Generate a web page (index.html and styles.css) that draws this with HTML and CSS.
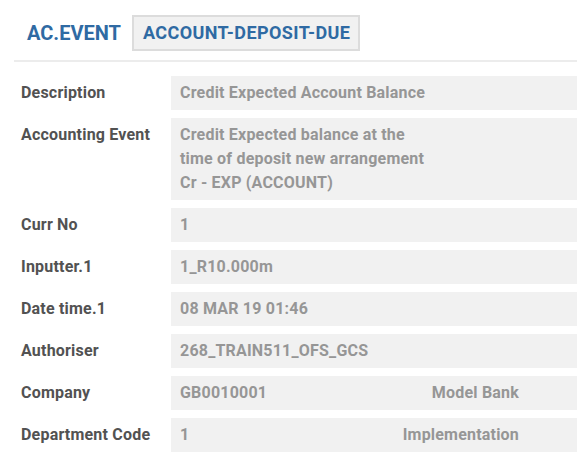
FILE: index.html
```html
<!DOCTYPE html>
<html>
<head>
<meta charset="utf-8">
<link rel="stylesheet" href="styles.css">
</head>
<body>
<div class="page">
  <div class="header">
    <h1 class="app">AC.EVENT</h1>
    <div class="tag">ACCOUNT-DEPOSIT-DUE</div>
  </div>
  <div class="rows">
    <div class="row"><div class="label">Description</div><div class="value">Credit Expected Account Balance</div></div>
    <div class="row"><div class="label">Accounting Event</div><div class="value">Credit Expected balance at the<br>time of deposit new arrangement<br>Cr - EXP (ACCOUNT)</div></div>
    <div class="row"><div class="label">Curr No</div><div class="value">1</div></div>
    <div class="row"><div class="label">Inputter.1</div><div class="value">1_R10.000m</div></div>
    <div class="row"><div class="label">Date time.1</div><div class="value">08 MAR 19 01:46</div></div>
    <div class="row"><div class="label">Authoriser</div><div class="value">268_TRAIN511_OFS_GCS</div></div>
    <div class="row"><div class="label">Company</div><div class="value split"><span>GB0010001</span><span class="extra">Model Bank</span></div></div>
    <div class="row"><div class="label">Department Code</div><div class="value split"><span>1</span><span class="extra">Implementation</span></div></div>
  </div>
</div>
</body>
</html>
```

FILE: styles.css
```css
html, body {
  margin: 0;
  padding: 0;
  background: #ffffff;
  font-family: Roboto, "Liberation Sans", sans-serif;
  font-weight: 700;
}
.page {
  padding-left: 14px;
  overflow: hidden;
}
.header {
  display: flex;
  align-items: center;
  padding: 15px 0 9px 13px;
  border-bottom: 2px solid #ececec;
}
.app {
  margin: 0 11px 0 0;
  font-size: 20px;
  font-weight: 700;
  color: #2f6aa3;
  line-height: 24px;
}
.tag {
  background: #f1f1f1;
  border: 2px solid #dcdcdc;
  color: #2f6aa3;
  font-size: 18px;
  line-height: 32px;
  padding: 0 8px 0 9px;
  letter-spacing: 0.4px;
}
.rows {
  display: flex;
  flex-direction: column;
  gap: 8px;
  padding-top: 14px;
}
.row {
  display: grid;
  grid-template-columns: 157px 1fr;
}
.label {
  padding: 5px 7px;
  font-size: 16px;
  line-height: 24px;
  color: #525252;
  letter-spacing: 0.2px;
}
.value {
  background: #f1f1f1;
  padding: 5px 9px;
  font-size: 16px;
  line-height: 24px;
  color: #969696;
  letter-spacing: 0.2px;
}
.split {
  display: flex;
  justify-content: space-between;
  padding-right: 58px;
}
```
